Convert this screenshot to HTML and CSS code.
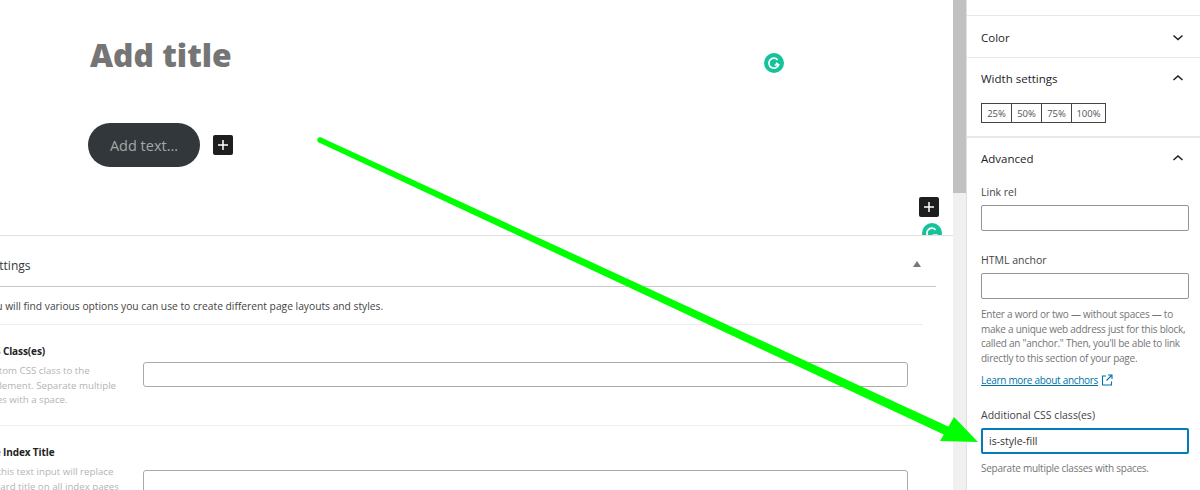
FILE: index.html
```html
<!DOCTYPE html>
<html lang="en">
<head>
    <meta charset="UTF-8">
    <meta name="viewport" content="width=device-width, initial-scale=1.0">
    <title>Edit Page</title>
    <link rel="stylesheet" href="styles.css">
</head>
<body>
    <div class="screen">
        <main class="editor">
            <section class="canvas">
                <h1 class="post-title">Add title</h1>
                <div class="button-row">
                    <div class="wp-button">Add text...</div>
                    <button class="inserter inserter-small"><svg viewBox="0 0 20 20" width="20" height="20"><path d="M10 5v10M5 10h10" /></svg></button>
                </div>
                <button class="inserter inserter-block"><svg viewBox="0 0 20 20" width="20" height="20"><path d="M10 5v10M5 10h10" /></svg></button>
                <svg class="grammarly grammarly-top" viewBox="0 0 20 20" width="20" height="20"><circle cx="10" cy="10" r="10" /><path d="M13.6 6.8a5 5 0 1 0 1 5.2h-4" /><path d="M12 9.8l2.8 2.2" /></svg>
                <svg class="grammarly grammarly-bottom" viewBox="0 0 20 20" width="20" height="20"><circle cx="10" cy="10" r="10" /><path d="M13.6 6.8a5 5 0 1 0 1 5.2h-4" /></svg>
            </section>

            <section class="metabox">
                <div class="metabox-head">
                    <h2>Settings</h2>
                    <span class="metabox-toggle"></span>
                </div>
                <div class="metabox-body">
                    <p class="metabox-intro">Here you will find various options you can use to create different page layouts and styles.</p>
                    <div class="option-row">
                        <div class="option-info">
                            <h3>A CSS Class(es)</h3>
                            <p>A custom CSS class to the<br>this element. Separate multiple<br>classes with a space.</p>
                        </div>
                        <input class="option-input" type="text">
                    </div>
                    <div class="option-row option-row-tall">
                        <div class="option-info">
                            <h3 class="option-title-wide">Page Index Title</h3>
                            <p>That this text input will replace<br>standard title on all index pages</p>
                        </div>
                        <input class="option-input" type="text">
                    </div>
                </div>
            </section>
        </main>

        <div class="scrollbar"><div class="scrollbar-thumb"></div></div>

        <aside class="sidebar">
            <div class="panel panel-top"></div>
            <div class="panel">
                <div class="panel-head panel-head-color">
                    <span>Color</span>
                    <svg class="chevron" viewBox="0 0 12 8" width="12" height="8"><path d="M1.5 1.5l4.5 4 4.5-4" /></svg>
                </div>
            </div>
            <div class="panel panel-width">
                <div class="panel-head">
                    <span>Width settings</span>
                    <svg class="chevron" viewBox="0 0 12 8" width="12" height="8"><path d="M1.5 6l4.5-4 4.5 4" /></svg>
                </div>
                <div class="width-group">
                    <button class="width-btn">25%</button>
                    <button class="width-btn">50%</button>
                    <button class="width-btn">75%</button>
                    <button class="width-btn width-btn-last">100%</button>
                </div>
            </div>
            <div class="panel panel-advanced">
                <div class="panel-head">
                    <span>Advanced</span>
                    <svg class="chevron" viewBox="0 0 12 8" width="12" height="8"><path d="M1.5 6l4.5-4 4.5 4" /></svg>
                </div>
                <label class="field-label">Link rel</label>
                <input class="field-input" type="text">
                <label class="field-label field-label-anchor">HTML anchor</label>
                <input class="field-input" type="text">
                <p class="help help-anchor">Enter a word or two — without spaces — to make a unique web address just for this block, called an "anchor." Then, you'll be able to link directly to this section of your page.</p>
                <div class="learn-row">
                    <a class="learn-more" href="#">Learn more about anchors</a>
                    <svg class="external" viewBox="0 0 12 12" width="12" height="12"><path d="M5 2H1.5v9h9V7.5M7 1h4v4M11 1L5.5 6.5" /></svg>
                </div>
                <label class="field-label field-label-css">Additional CSS class(es)</label>
                <input class="field-input field-input-active" type="text" value="is-style-fill">
                <p class="help help-css">Separate multiple classes with spaces.</p>
            </div>
        </aside>

        <svg class="annotation" viewBox="0 0 1200 490" width="1200" height="490">
            <path d="M318.9 142.45L321.1 137.55L952 428.3L948 436.5Z" />
            <circle cx="320" cy="140" r="2.7" />
            <polygon points="954,417 978,442 940,441" />
        </svg>
    </div>
</body>
</html>
```

FILE: styles.css
```css
* {
    box-sizing: border-box;
}

body {
    margin: 0;
    font-family: "Open Sans", "Noto Sans", Arial, sans-serif;
    background-color: #fff;
    color: #1e1e1e;
}

.screen {
    position: relative;
    display: flex;
    width: 1200px;
    height: 490px;
    overflow: hidden;
}

.editor {
    width: 953px;
    flex-shrink: 0;
    overflow: hidden;
}

/* Block canvas */
.canvas {
    position: relative;
    height: 236px;
    padding: 33px 0 0 90px;
    border-bottom: 1px solid #e0e0e0;
    overflow: hidden;
}

.post-title {
    margin: 0;
    height: 44px;
    font-family: "Noto Sans", "Open Sans", sans-serif;
    font-size: 31.8px;
    line-height: 44px;
    font-weight: 900;
    color: #757575;
}

.button-row {
    display: flex;
    align-items: center;
    gap: 13px;
    margin: 46px 0 0 -2px;
}

.wp-button {
    width: 112px;
    height: 44px;
    border-radius: 22px;
    background-color: #32373c;
    color: #a4a7aa;
    font-size: 14.5px;
    line-height: 46px;
    text-align: center;
}

.inserter {
    display: block;
    width: 20px;
    height: 20px;
    padding: 0;
    border: none;
    border-radius: 2px;
    background-color: #1e1e1e;
}

.inserter svg {
    display: block;
}

.inserter path {
    fill: none;
    stroke: #fff;
    stroke-width: 1.5;
}

.inserter-block {
    position: absolute;
    left: 919px;
    top: 197px;
}

.grammarly {
    position: absolute;
}

.grammarly circle {
    fill: #15c39a;
}

.grammarly path {
    fill: none;
    stroke: #fff;
    stroke-width: 1.7;
}

.grammarly-top {
    left: 764px;
    top: 53px;
}

.grammarly-bottom {
    left: 922px;
    top: 223px;
}

/* Settings box under the canvas */
.metabox {
    margin-left: -27px;
}

.metabox-head {
    position: relative;
    width: 963px;
    height: 51px;
    padding-left: 13px;
    border-bottom: 1px solid #c8c8c8;
}

.metabox-head h2 {
    margin: 0;
    font-size: 12px;
    font-weight: 400;
    line-height: 60px;
    color: #32373c;
}

.metabox-toggle {
    position: absolute;
    left: 940px;
    top: 25px;
    border-left: 4px solid transparent;
    border-right: 4px solid transparent;
    border-bottom: 6px solid #777;
}

.metabox-body {
    width: 950px;
}

.metabox-intro {
    margin: 0;
    height: 38px;
    text-indent: -14px;
    font-size: 10.25px;
    line-height: 38px;
    color: #444;
    border-bottom: 1px solid #eee;
    white-space: nowrap;
}

.option-row {
    display: flex;
    align-items: center;
    height: 101px;
    border-bottom: 1px solid #f2f2f2;
}

.option-row-tall {
    height: 115px;
    border-bottom: none;
}

.option-info {
    align-self: flex-start;
    width: 170px;
    padding-top: 19px;
    flex-shrink: 0;
}

.option-info h3 {
    margin: 0 0 5px;
    padding-left: 1px;
    font-size: 10px;
    font-weight: 700;
    letter-spacing: -0.1px;
    line-height: 15px;
    color: #222;
}

.option-info .option-title-wide {
    padding-left: 4px;
}

.option-info p {
    margin: 0;
    padding-left: 2px;
    font-size: 9.7px;
    line-height: 14.7px;
    color: #b4b4b4;
    white-space: nowrap;
}

.option-input {
    width: 765px;
    height: 25px;
    margin-bottom: 2px;
    border: 1px solid #aaa;
    border-radius: 3px;
    background-color: #fff;
}

/* Scrollbar */
.scrollbar {
    width: 13px;
    flex-shrink: 0;
    background-color: #f0f0f0;
}

.scrollbar-thumb {
    width: 13px;
    height: 193px;
    background-color: #c1c1c1;
}

/* Right sidebar */
.sidebar {
    width: 234px;
    flex-shrink: 0;
    border-left: 1px solid #e0e0e0;
}

.panel {
    padding: 0 11px 0 14px;
    border-bottom: 1px solid #e8e8e8;
}

.panel-top {
    height: 16px;
}

.panel-head {
    display: flex;
    justify-content: space-between;
    align-items: center;
    height: 42px;
    padding-bottom: 2px;
    font-size: 11.5px;
    font-weight: 500;
    color: #1e2327;
}

.panel-head-color {
    height: 41px;
    padding-top: 2px;
    padding-bottom: 0;
}

.panel-head .chevron {
    margin-right: 5px;
}

.chevron path {
    fill: none;
    stroke: #1e1e1e;
    stroke-width: 1.5;
}

.panel-width {
    height: 80px;
    border-bottom-width: 2px;
}

.width-group {
    display: flex;
    margin-top: 3px;
}

.width-btn {
    width: 30px;
    height: 20px;
    padding: 0;
    border: 1px solid #444;
    border-right: none;
    background-color: #fff;
    font-family: inherit;
    font-size: 9.5px;
    color: #555;
}

.width-btn-last {
    width: 35px;
    border-right: 1px solid #444;
}

.panel-advanced {
    border-bottom: none;
}

.field-label {
    display: block;
    margin-top: 4px;
    font-size: 10.5px;
    line-height: 16px;
    color: #444;
}

.field-label-anchor {
    margin-top: 21px;
}

.field-label-css {
    margin-top: 19px;
}

.field-input {
    display: block;
    width: 208px;
    height: 26px;
    margin-top: 5px;
    padding: 0 6px;
    border: 1px solid #949494;
    border-radius: 2px;
    background-color: #fff;
    font-family: inherit;
    font-size: 10.5px;
    color: #333;
}

.field-input-active {
    border: 2px solid #007cba;
}

.help {
    margin: 0;
    font-size: 10px;
    letter-spacing: -0.25px;
    line-height: 14.6px;
    color: #757575;
}

.help-anchor {
    margin-top: 8px;
}

.help-css {
    margin-top: 7px;
}

.learn-row {
    display: flex;
    align-items: center;
    gap: 3px;
    height: 16px;
    margin-top: 7px;
}

.learn-more {
    font-size: 10px;
    letter-spacing: -0.3px;
    line-height: 16px;
    color: #0073aa;
}

.external path {
    fill: none;
    stroke: #0073aa;
    stroke-width: 1.1;
}

/* Green arrow drawn over the screenshot */
.annotation {
    position: absolute;
    left: 0;
    top: 0;
    pointer-events: none;
    fill: #00ff00;
}
```
